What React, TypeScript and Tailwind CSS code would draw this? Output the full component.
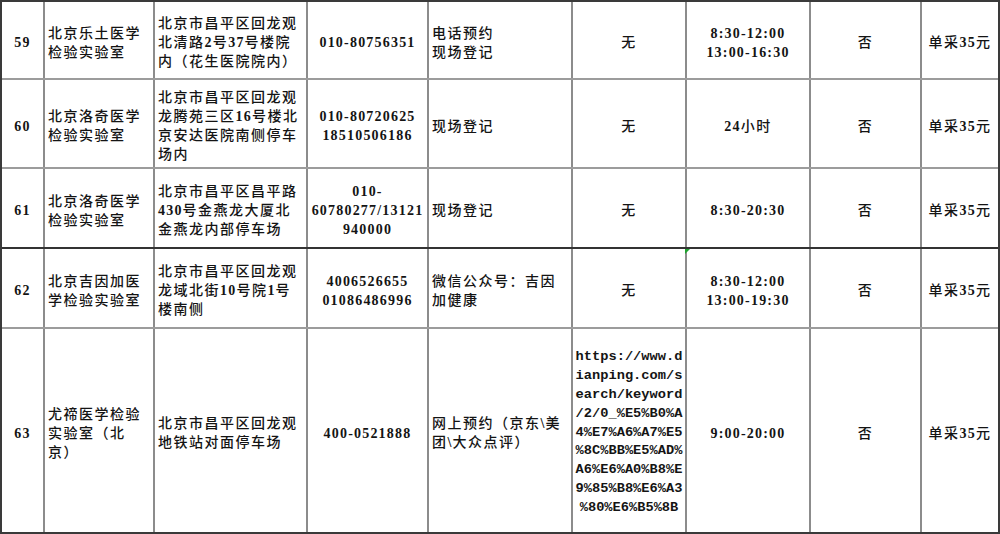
import type { ReactNode } from "react";

type Align = "left" | "center";

type CellData = {
  lines: string[];
  align: Align;
  mono?: boolean;
  flag?: boolean;
};

type Row = {
  height: string;
  border: string;
  cells: CellData[];
};

const L = (...lines: string[]): CellData => ({ lines, align: "left" });
const C = (...lines: string[]): CellData => ({ lines, align: "center" });

const rows: Row[] = [
  {
    height: "h-[78px]",
    border: "border-b-2 border-[#9c9c9c]",
    cells: [
      C("59"),
      L("北京乐土医学", "检验实验室"),
      L("北京市昌平区回龙观", "北清路2号37号楼院", "内（花生医院院内）"),
      C("010-80756351"),
      L("电话预约", "现场登记"),
      C("无"),
      C("8:30-12:00", "13:00-16:30"),
      C("否"),
      C("单采35元"),
    ],
  },
  {
    height: "h-[89px]",
    border: "border-b-2 border-[#9c9c9c]",
    cells: [
      C("60"),
      L("北京洛奇医学", "检验实验室"),
      L("北京市昌平区回龙观", "龙腾苑三区16号楼北", "京安达医院南侧停车", "场内"),
      C("010-80720625", "18510506186"),
      L("现场登记"),
      C("无"),
      C("24小时"),
      C("否"),
      C("单采35元"),
    ],
  },
  {
    height: "h-[80px]",
    border: "border-b-2 border-[#333333]",
    cells: [
      C("61"),
      L("北京洛奇医学", "检验实验室"),
      L("北京市昌平区昌平路", "430号金燕龙大厦北", "金燕龙内部停车场"),
      C("010-", "60780277/13121", "940000"),
      L("现场登记"),
      C("无"),
      C("8:30-20:30"),
      C("否"),
      C("单采35元"),
    ],
  },
  {
    height: "h-[80px]",
    border: "border-b-2 border-[#9c9c9c]",
    cells: [
      C("62"),
      L("北京吉因加医", "学检验实验室"),
      L("北京市昌平区回龙观", "龙域北街10号院1号", "楼南侧"),
      C("4006526655", "01086486996"),
      L("微信公众号：吉因", "加健康"),
      C("无"),
      { ...C("8:30-12:00", "13:00-19:30"), flag: true },
      C("否"),
      C("单采35元"),
    ],
  },
  {
    height: "h-[203px]",
    border: "",
    cells: [
      C("63"),
      L("尤禘医学检验", "实验室（北", "京）"),
      L("北京市昌平区回龙观", "地铁站对面停车场"),
      C("400-0521888"),
      L("网上预约（京东\\美", "团\\大众点评）"),
      {
        align: "center",
        mono: true,
        lines: [
          "https://www.d",
          "ianping.com/s",
          "earch/keyword",
          "/2/0_%E5%B0%A",
          "4%E7%A6%A7%E5",
          "%8C%BB%E5%AD%",
          "A6%E6%A0%B8%E",
          "9%85%B8%E6%A3",
          "%80%E6%B5%8B",
        ],
      },
      C("9:00-20:00"),
      C("否"),
      C("单采35元"),
    ],
  },
];

// ascii runs get the bold serif look, CJK runs get a little letter spacing
function rich(text: string): ReactNode[] {
  return text
    .split(/([\x00-\x7F]+)/)
    .filter((part) => part.length > 0)
    .map((part, i) =>
      /^[\x00-\x7F]+$/.test(part) ? (
        <span key={i} className="font-bold tracking-[1.2px]">
          {part}
        </span>
      ) : (
        <span key={i} className="font-medium tracking-[1.5px]">
          {part}
        </span>
      )
    );
}

function Cell({ cell, last }: { cell: CellData; last: boolean }) {
  const alignClass =
    cell.align === "center" ? "justify-center text-center" : "justify-start text-left pl-[3px]";
  return (
    <div
      className={`relative flex items-center pt-[5px] ${alignClass} ${
        last ? "" : "border-r-2 border-[#8c8c8c]"
      }`}
    >
      {cell.flag && (
        <div className="absolute -left-[2px] top-0 h-0 w-0 border-t-[5px] border-r-[5px] border-t-[#1fa32f] border-r-transparent" />
      )}
      {cell.mono ? (
        <div className="font-['Liberation_Mono',monospace] text-[13.7px] font-bold leading-[18.8px]">
          {cell.lines.map((line, i) => (
            <div key={i} className="whitespace-nowrap">
              {line}
            </div>
          ))}
        </div>
      ) : (
        <div>
          {cell.lines.map((line, i) => (
            <div key={i} className="whitespace-nowrap leading-[19px]">
              {rich(line)}
            </div>
          ))}
        </div>
      )}
    </div>
  );
}

export default function App() {
  return (
    <div className="h-[534px] w-[1000px] overflow-hidden bg-white">
      <div className="flex h-full w-full flex-col border-2 border-[#3a3a3a] font-['Liberation_Serif','Noto_Sans_CJK_SC',serif] text-[14px] text-[#141414]">
        {rows.map((row, r) => (
          <div
            key={r}
            className={`grid shrink-0 grid-cols-[43px_110px_153px_121px_144px_114px_124px_111px_76px] ${row.height} ${row.border}`}
          >
            {row.cells.map((cell, c) => (
              <Cell key={c} cell={cell} last={c === row.cells.length - 1} />
            ))}
          </div>
        ))}
      </div>
    </div>
  );
}
